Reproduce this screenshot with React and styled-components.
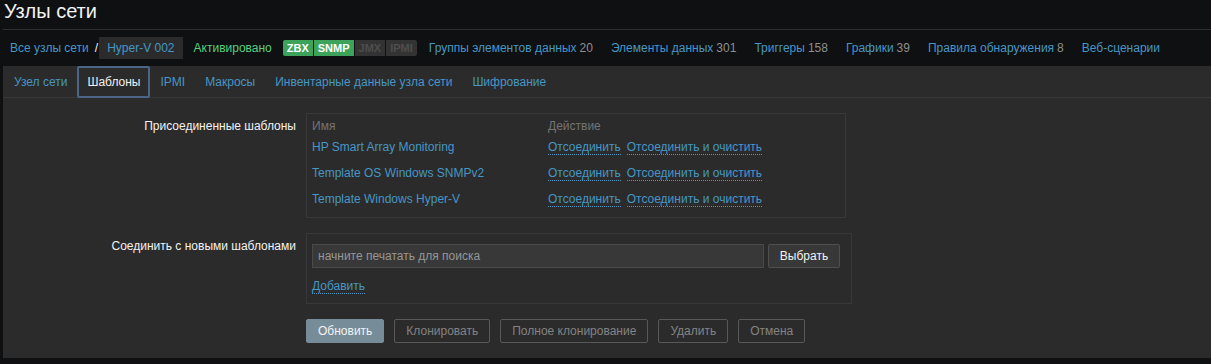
import styled, { createGlobalStyle } from 'styled-components';

const GlobalStyle = createGlobalStyle`
  body {
    margin: 0;
    background: #0e1012;
    color: #f2f2f2;
    font-family: 'Liberation Sans', Arial, sans-serif;
    font-size: 12px;
  }
`;

const Page = styled.div`
  padding-left: 3px;
  height: 364px;
  overflow: hidden;
`;

const Header = styled.div`
  height: 29px;
  border-bottom: 1px solid #2e2e2e;
  padding-left: 1px;
`;

const Title = styled.h1`
  margin: 0;
  font-size: 20px;
  line-height: 22px;
  font-weight: normal;
  color: #f2f2f2;
`;

const Crumbs = styled.div`
  height: 36px;
  display: flex;
  align-items: center;
  padding-left: 7px;
  white-space: nowrap;
`;

const Link = styled.a`
  color: #4796c4;
  text-decoration: none;
  cursor: pointer;
`;

const Slash = styled.span`
  margin: 0 1px 0 6px;
  color: #f2f2f2;
`;

const CurrentHost = styled.span`
  display: flex;
  align-items: center;
  height: 22px;
  padding: 0 8px;
  background: #2b2b2b;
  color: #4796c4;
`;

const Status = styled.span`
  margin-left: 11px;
  color: #59cf7d;
`;

const Badges = styled.span`
  display: flex;
  gap: 1px;
  margin-left: 11px;
  margin-right: -6px;
`;

const Badge = styled.span`
  height: 16px;
  line-height: 16px;
  padding: 0 4px;
  font-size: 11px;
  font-weight: bold;
  background: ${(p) => (p.$on ? '#3da35b' : '#333333')};
  color: ${(p) => (p.$on ? '#ffffff' : '#4e4e4e')};
  border-radius: ${(p) => p.$radius || '0'};
`;

const NavItem = styled.span`
  margin-left: 18px;
`;

const Count = styled.span`
  color: #8f8f8f;
  margin-left: 3px;
`;

const Panel = styled.div`
  background: #2b2b2b;
  height: 292px;
`;

const TabList = styled.div`
  display: flex;
  height: 31px;
  padding-left: 1px;
  border-bottom: 1px solid #383838;
`;

const Tab = styled.a`
  display: flex;
  align-items: center;
  height: 32px;
  box-sizing: border-box;
  padding: 0 8px;
  border: 2px solid ${(p) => (p.$active ? '#4a6585' : 'transparent')};
  border-radius: 2px;
  color: ${(p) => (p.$active ? '#f2f2f2' : '#4796c4')};
  text-decoration: none;
  cursor: pointer;
`;

const Form = styled.div`
  display: flex;
  flex-direction: column;
  gap: 15px;
  padding-top: 15px;
`;

const FormRow = styled.div`
  display: grid;
  grid-template-columns: 293px auto;
  column-gap: 10px;
  align-items: start;
`;

const Label = styled.div`
  text-align: right;
  padding-top: 5px;
  line-height: 16px;
  color: #f2f2f2;
`;

const Box = styled.div`
  width: ${(p) => p.$width}px;
  box-sizing: border-box;
  border: 1px solid #383838;
  padding: ${(p) => p.$pad};
`;

const TemplateGrid = styled.div`
  display: grid;
  grid-template-columns: 236px auto;
  grid-template-rows: 15px;
  grid-auto-rows: 26px;
  align-items: center;
`;

const HeadCell = styled.div`
  color: #737373;
  line-height: 15px;
`;

const Actions = styled.div`
  display: flex;
  gap: 6px;
`;

const DottedLink = styled(Link)`
  border-bottom: 1px dotted #4796c4;
  line-height: 14px;
`;

const SearchRow = styled.div`
  display: flex;
  gap: 4px;
`;

const SearchInput = styled.input`
  width: 452px;
  height: 24px;
  box-sizing: border-box;
  padding: 0 5px;
  background: #383838;
  border: 1px solid #4a4a4a;
  border-radius: 0;
  color: #f2f2f2;
  font: inherit;
  outline: none;

  &::placeholder {
    color: #969696;
  }
`;

const Button = styled.button`
  height: 24px;
  box-sizing: border-box;
  padding: 0 ${(p) => p.$px || 11}px;
  border-radius: 2px;
  font: inherit;
  cursor: pointer;
  border: 1px solid ${(p) => (p.$primary ? '#768d99' : p.$filled ? '#4f4f4f' : '#585858')};
  background: ${(p) => (p.$primary ? '#768d99' : p.$filled ? '#383838' : 'transparent')};
  color: ${(p) => (p.$primary || p.$filled ? '#f2f2f2' : '#838383')};
`;

const AddRow = styled.div`
  margin-top: 10px;
  line-height: 16px;
`;

const Buttons = styled.div`
  display: flex;
  gap: 10px;
`;

const nav = [
  ['Группы элементов данных', 20],
  ['Элементы данных', 301],
  ['Триггеры', 158],
  ['Графики', 39],
  ['Правила обнаружения', 8],
  ['Веб-сценарии'],
];

const tabs = ['Узел сети', 'Шаблоны', 'IPMI', 'Макросы', 'Инвентарные данные узла сети', 'Шифрование'];

const templates = ['HP Smart Array Monitoring', 'Template OS Windows SNMPv2', 'Template Windows Hyper-V'];

export default function App() {
  return (
    <>
      <GlobalStyle />
      <Page>
        <Header>
          <Title>Узлы сети</Title>
        </Header>
        <Crumbs>
          <Link>Все узлы сети</Link>
          <Slash>/</Slash>
          <CurrentHost>Hyper-V 002</CurrentHost>
          <Status>Активировано</Status>
          <Badges>
            <Badge $on $radius="2px 0 0 2px">ZBX</Badge>
            <Badge $on>SNMP</Badge>
            <Badge>JMX</Badge>
            <Badge $radius="0 2px 2px 0">IPMI</Badge>
          </Badges>
          {nav.map(([name, count]) => (
            <NavItem key={name}>
              <Link>{name}</Link>
              {count !== undefined && <Count>{count}</Count>}
            </NavItem>
          ))}
        </Crumbs>
        <Panel>
          <TabList>
            {tabs.map((t) => (
              <Tab key={t} $active={t === 'Шаблоны'}>
                {t}
              </Tab>
            ))}
          </TabList>
          <Form>
            <FormRow>
              <Label>Присоединенные шаблоны</Label>
              <Box $width={540} $pad="5px">
                <TemplateGrid>
                  <HeadCell>Имя</HeadCell>
                  <HeadCell>Действие</HeadCell>
                  {templates.map((t) => (
                    <>
                      <Link key={t}>{t}</Link>
                      <Actions key={t + '-a'}>
                        <DottedLink>Отсоединить</DottedLink>
                        <DottedLink>Отсоединить и очистить</DottedLink>
                      </Actions>
                    </>
                  ))}
                </TemplateGrid>
              </Box>
            </FormRow>
            <FormRow>
              <Label>Соединить с новыми шаблонами</Label>
              <Box $width={546} $pad="10px 11px 9px 5px">
                <SearchRow>
                  <SearchInput placeholder="начните печатать для поиска" />
                  <Button $filled $px={10} style={{ width: 72 }}>
                    Выбрать
                  </Button>
                </SearchRow>
                <AddRow>
                  <DottedLink>Добавить</DottedLink>
                </AddRow>
              </Box>
            </FormRow>
            <FormRow>
              <div />
              <Buttons>
                <Button $primary>Обновить</Button>
                <Button>Клонировать</Button>
                <Button>Полное клонирование</Button>
                <Button>Удалить</Button>
                <Button>Отмена</Button>
              </Buttons>
            </FormRow>
          </Form>
        </Panel>
      </Page>
    </>
  );
}
